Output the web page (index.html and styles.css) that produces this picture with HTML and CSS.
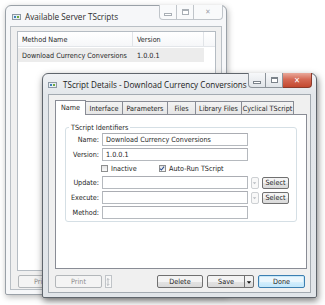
FILE: index.html
```html
<!DOCTYPE html>
<html>
<head>
<meta charset="utf-8">
<link rel="stylesheet" href="styles.css">
</head>
<body>
<div class="win back">
  <div class="titlebar">
    <span class="appicon"><i></i><i></i></span>
    <span class="title">Available Server TScripts</span>
    <div class="caps">
      <span class="cap min"><b></b></span>
      <span class="cap max"><b></b></span>
      <span class="cap close">&#x2715;</span>
    </div>
  </div>
  <div class="client">
    <div class="listview">
      <div class="lv-head">
        <span class="c1">Method Name</span>
        <span class="c2">Version</span>
        <span class="c3"></span>
      </div>
      <div class="lv-row">
        <span class="c1">Download Currency Conversions</span>
        <span class="c2">1.0.0.1</span>
      </div>
    </div>
    <div class="back-foot">
      <span class="btn disabled bprint">Print</span>
    </div>
  </div>
</div>

<div class="win front">
  <div class="titlebar">
    <span class="appicon"><i></i><i></i></span>
    <span class="title">TScript Details - Download Currency Conversions</span>
    <div class="caps">
      <span class="cap min"><b></b></span>
      <span class="cap max"><b></b></span>
      <span class="cap close red">&#x2715;</span>
    </div>
  </div>
  <div class="client">
    <div class="tabs">
      <span class="tab sel t1">Name</span>
      <span class="tab t2">Interface</span>
      <span class="tab t3">Parameters</span>
      <span class="tab t4">Files</span>
      <span class="tab t5">Library Files</span>
      <span class="tab t6">Cyclical TScript</span>
    </div>
    <div class="panel">
      <fieldset class="group">
        <legend>TScript Identifiers</legend>
        <div class="row"><label>Name:</label><span class="input">Download Currency Conversions</span></div>
        <div class="row"><label>Version:</label><span class="input">1.0.0.1</span></div>
        <div class="row checks">
          <span class="chk"><span class="box"></span>Inactive</span>
          <span class="chk"><span class="box on"><svg viewBox="0 0 7 7" width="7" height="7"><path d="M1.2 3.6 L2.8 5.3 L5.9 1.3" fill="none" stroke="#2a4d8f" stroke-width="1.2"/></svg></span>Auto-Run TScript</span>
        </div>
        <div class="row"><label>Update:</label><span class="input"></span><span class="drop"><svg viewBox="0 0 8 12" width="8" height="12"><path d="M2 5 L6 5 L4 7.5 Z" fill="#b9bdc2"/></svg></span><span class="btn sel-btn">Select</span></div>
        <div class="row"><label>Execute:</label><span class="input"></span><span class="drop"><svg viewBox="0 0 8 12" width="8" height="12"><path d="M2 5 L6 5 L4 7.5 Z" fill="#b9bdc2"/></svg></span><span class="btn sel-btn">Select</span></div>
        <div class="row"><label>Method:</label><span class="input"></span></div>
      </fieldset>
    </div>
    <div class="foot">
      <span class="btn disabled print">Print</span>
      <span class="spin"><svg viewBox="0 0 7 12" width="7" height="12"><path d="M3.5 2 L3.5 10 M2 3.5 L3.5 2 L5 3.5 M2 8.5 L3.5 10 L5 8.5" fill="none" stroke="#a7acb1" stroke-width="0.9"/></svg></span>
      <span class="grow"></span>
      <span class="btn del">Delete</span>
      <span class="btn save"><span class="save-l">Save</span><span class="save-d"><svg viewBox="0 0 9 13" width="9" height="13"><path d="M2 5 L7 5 L4.5 8 Z" fill="#111"/></svg></span></span>
      <span class="btn done">Done</span>
    </div>
  </div>
</div>
</body>
</html>
```

FILE: styles.css
```css
* { box-sizing: border-box; }
body {
  margin: 0;
  width: 325px;
  height: 305px;
  background: #ffffff;
  font-family: "DejaVu Sans Condensed", "DejaVu Sans", sans-serif;
  font-stretch: condensed;
  font-size: 7.2px;
  color: #1e1e1e;
  position: relative;
  overflow: hidden;
}
.win {
  position: absolute;
  border: 1px solid #7d848b;
  border-radius: 6px 6px 2px 2px;
  display: flex;
  flex-direction: column;
}
.back {
  left: 5px; top: 5px; width: 222px; height: 290px;
  background: #f6f7f9;
  border-color: #9aa1a8;
  box-shadow: 1px 2px 6px rgba(0,0,0,0.28);
  padding: 0 4px 4px 4px;
}
.front {
  left: 42px; top: 73px; width: 275px; height: 225px;
  background: linear-gradient(#f0f2f5, #e3e7eb 20px, #e1e5e9);
  border-color: #5f656c;
  box-shadow: 1px 3px 7px rgba(0,0,0,0.5);
  padding: 0 5px 4px 5px;
}

.titlebar {
  height: 20px;
  display: flex;
  align-items: center;
  position: relative;
  flex: none;
}
.appicon {
  width: 9px; height: 6px;
  border: 1px solid #8d99a4;
  background: #e8eef3;
  display: flex; gap: 1px; padding: 1px;
  margin-right: 6px;
  margin-top: 1px;
}
.back .appicon { margin-left: 2px; }
.front .appicon { margin-left: 0px; }
.appicon i { display: block; width: 2px; height: 2px; background: #3d7fb8; }
.appicon i + i { background: #6cab3c; }
.title {
  font-family: "Open Sans", "Liberation Sans", sans-serif;
  font-stretch: normal;
  font-size: 8.1px;
  color: #1a1a1a;
}
.back .title { color: #2e2e2e; font-size: 8.2px; margin-left: -2px; }

.caps {
  position: absolute;
  top: -1px;
  display: flex;
  height: 15px;
}
.back .caps { right: -1px; }
.front .caps { right: -1px; }
.cap {
  display: flex; align-items: center; justify-content: center;
  height: 15px;
  border: 1px solid #8c939a;
  border-top: none;
  background: linear-gradient(#f7f8fa, #e1e5e9);
}
.cap.min { width: 18px; border-radius: 0 0 0 4px; }
.cap.max { width: 17px; border-left: none; }
.cap.close { width: 29px; border-left: none; border-radius: 0 0 4px 0; font-size: 7px; color: #9ba1a7; }
.back .cap { border-color: #c0c5ca; background: #f9fafb; }
.cap.min b { width: 8px; height: 3px; border: 1px solid #7b838b; margin-top: 4px; background: #fff; }
.cap.max b { width: 7px; height: 6px; border: 1px solid #7b838b; border-top-width: 2px; background: #fff; }
.back .cap b { border-color: #a9afb5; }
.cap.red {
  background: linear-gradient(#e9a99b, #d56a55 45%, #c3482f);
  border-color: #8b3a2b;
  color: #fff;
  font-weight: bold;
  font-size: 8px;
}

.client {
  flex: 1;
  background: #f0f0f0;
  border: 1px solid #a3aab1;
  display: flex;
  flex-direction: column;
}
.back .client { padding: 4px 5px 0 6px; border-color: #b9bfc5; }
.listview {
  height: 240px;
  background: #fff;
  border: 1px solid #b5bcc3;
}
.lv-head {
  display: flex;
  height: 15px;
  align-items: stretch;
  border-bottom: 1px solid #e3e6ea;
  background: linear-gradient(#ffffff, #f6f7f9);
}
.lv-head span { display: flex; align-items: center; border-right: 1px solid #e1e4e8; padding-left: 4px; }
.c1 { width: 115px; }
.c2 { width: 71px; }
.c3 { flex: 1; border-right: none !important; }
.lv-row {
  display: flex;
  height: 14px;
  align-items: center;
  background: #ececec;
  margin-top: 1px;
  width: 186px;
}
.lv-row span { padding-left: 4px; }

.back-foot { display: flex; padding-top: 4px; padding-left: 1px; }
.btn {
  display: flex; align-items: center; justify-content: center;
  height: 13px;
  border: 1px solid #707070;
  border-radius: 2px;
  background: linear-gradient(#f3f3f3 50%, #e3e3e3 50%, #dadada);
  color: #1e1e1e;
  flex: none;
}
.btn.disabled { border-color: #b3b7ba; background: #f4f4f4; color: #8f8f8f; }
.bprint { width: 47px; }

/* front client */
.front .client { padding: 4px 3px 0 6px; }
.tabs { display: flex; height: 15px; align-items: flex-end; }
.tab {
  height: 13px;
  display: flex; align-items: center; justify-content: center;
  border: 1px solid #898c95;
  border-bottom: none;
  margin-left: -1px;
  background: linear-gradient(#f3f3f3, #e6e6e6);
  white-space: nowrap;
  flex: none;
}
.t1 { width: 31px; margin-left: 0; }
.t2 { width: 38px; }
.t3 { width: 46px; }
.t4 { width: 29px; }
.t5 { width: 47px; }
.t6 { width: 53px; }
.tab.sel { height: 15px; background: #fff; position: relative; z-index: 1; margin-bottom: -1px; align-items: flex-start; padding-top: 2px; }
.panel {
  height: 155px;
  width: 252px;
  background: #fff;
  border: 1px solid #898c95;
  padding: 8px 0 0 9px;
}
.group {
  margin: 0;
  border: 1px solid #d5dfe5;
  border-radius: 3px;
  padding: 0 0 1px 0;
  width: 232px;
  min-width: 0;
}
.group legend { padding: 0 2px; margin-left: 3px; line-height: 9px; }
.row { display: flex; align-items: center; height: 15px; }
.row label { width: 36px; text-align: right; padding-right: 3px; flex: none; white-space: nowrap; }
.input {
  width: 146px; height: 13px;
  border: 1px solid #b5b9be;
  border-top-color: #abadb3;
  background: #fff;
  padding-left: 3px;
  display: flex; align-items: center;
  flex: none;
  white-space: nowrap;
}
.checks { height: 13px; padding-left: 35px; }
.chk { display: flex; align-items: center; gap: 3px; width: 58px; white-space: nowrap; flex: none; }
.box {
  width: 7px; height: 7px;
  border: 1px solid #8e8f8f;
  background: linear-gradient(#e2e2e2, #fafafa);
  display: flex;
  flex: none;
}
.box svg { margin: -1px 0 0 -1px; }
.drop {
  width: 8px; height: 12px; margin-left: 3px;
  border: 1px solid #cdd0d3; border-radius: 2px;
  background: #f8f8f8; display: flex; flex: none;
}
.drop svg { margin: -1px 0 0 -1px; }
.sel-btn { width: 27px; margin-left: 3px; height: 12px; }

.foot { display: flex; align-items: center; margin-top: 6px; padding-right: 2px; }
.print { width: 47px; }
.spin { width: 7px; height: 13px; border: 1px solid #c0c4c8; margin-left: 3px; display: flex; background: #f7f7f7; flex: none; }
.spin svg { margin: 0 0 0 -1px; }
.grow { flex: 1; }
.del { width: 46px; }
.save { width: 47px; margin-left: 4px; padding: 0; justify-content: flex-start; overflow: hidden; }
.save-l { flex: 1; text-align: center; }
.save-d { width: 9px; border-left: 1px solid #707070; height: 100%; display: flex; }
.done {
  width: 47px; margin-left: 4px;
  border-color: #3c7fb1;
  background: linear-gradient(#eaf6fd 50%, #d9f0fc 50%, #bee6fd);
  box-shadow: inset 0 0 0 1px #c9e8f8;
}
```
